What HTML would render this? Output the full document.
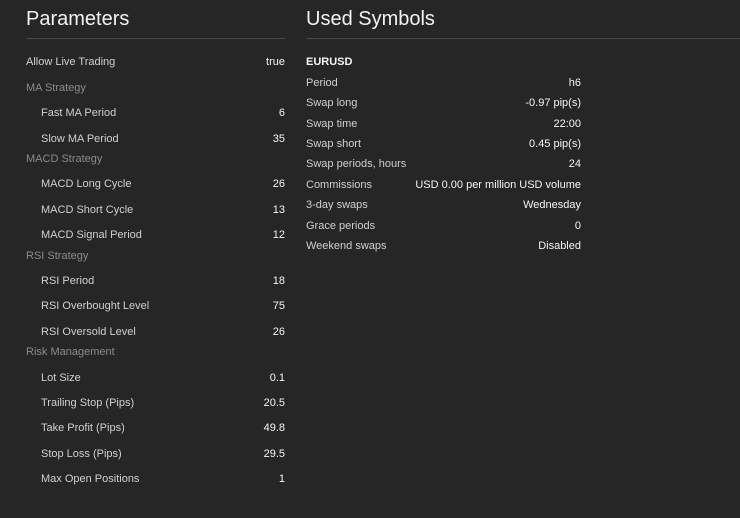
<!DOCTYPE html>
<html><head><style>
body{margin:0;width:740px;height:518px;background:#262626;font-family:"Liberation Sans",sans-serif;font-size:11px;overflow:hidden;position:relative}
div{position:absolute;line-height:16px;white-space:nowrap}
.h{font-size:20px;color:#f2f2f2;line-height:24px}
.l{color:#d0d0d0}
.s{color:#8a8a8a}
.v{color:#f5f5f5;text-align:right}
.hr{height:1px;background:#4a4a4a}
</style></head><body>
<div class="h" style="left:26px;top:7px">Parameters</div>
<div class="hr" style="left:26px;top:38px;width:259px"></div>
<div class="h" style="left:306px;top:7px">Used Symbols</div>
<div class="hr" style="left:306px;top:38px;width:434px"></div>

<div class="l" style="left:26px;top:54px">Allow Live Trading</div><div class="v" style="right:455px;top:54px">true</div>
<div class="s" style="left:26px;top:80px">MA Strategy</div>
<div class="l" style="left:41px;top:105px">Fast MA Period</div><div class="v" style="right:455px;top:105px">6</div>
<div class="l" style="left:41px;top:131px">Slow MA Period</div><div class="v" style="right:455px;top:131px">35</div>
<div class="s" style="left:26px;top:151px">MACD Strategy</div>
<div class="l" style="left:41px;top:176px">MACD Long Cycle</div><div class="v" style="right:455px;top:176px">26</div>
<div class="l" style="left:41px;top:202px">MACD Short Cycle</div><div class="v" style="right:455px;top:202px">13</div>
<div class="l" style="left:41px;top:227px">MACD Signal Period</div><div class="v" style="right:455px;top:227px">12</div>
<div class="s" style="left:26px;top:248px">RSI Strategy</div>
<div class="l" style="left:41px;top:273px">RSI Period</div><div class="v" style="right:455px;top:273px">18</div>
<div class="l" style="left:41px;top:298px">RSI Overbought Level</div><div class="v" style="right:455px;top:298px">75</div>
<div class="l" style="left:41px;top:324px">RSI Oversold Level</div><div class="v" style="right:455px;top:324px">26</div>
<div class="s" style="left:26px;top:344px">Risk Management</div>
<div class="l" style="left:41px;top:370px">Lot Size</div><div class="v" style="right:455px;top:370px">0.1</div>
<div class="l" style="left:41px;top:395px">Trailing Stop (Pips)</div><div class="v" style="right:455px;top:395px">20.5</div>
<div class="l" style="left:41px;top:420px">Take Profit (Pips)</div><div class="v" style="right:455px;top:420px">49.8</div>
<div class="l" style="left:41px;top:446px">Stop Loss (Pips)</div><div class="v" style="right:455px;top:446px">29.5</div>
<div class="l" style="left:41px;top:471px">Max Open Positions</div><div class="v" style="right:455px;top:471px">1</div>

<div class="v" style="left:306px;top:54px;font-weight:bold;text-align:left">EURUSD</div>
<div class="l" style="left:306px;top:75px">Period</div><div class="v" style="right:159px;top:75px">h6</div>
<div class="l" style="left:306px;top:95px">Swap long</div><div class="v" style="right:159px;top:95px">-0.97 pip(s)</div>
<div class="l" style="left:306px;top:116px">Swap time</div><div class="v" style="right:159px;top:116px">22:00</div>
<div class="l" style="left:306px;top:136px">Swap short</div><div class="v" style="right:159px;top:136px">0.45 pip(s)</div>
<div class="l" style="left:306px;top:156px">Swap periods, hours</div><div class="v" style="right:159px;top:156px">24</div>
<div class="l" style="left:306px;top:177px">Commissions</div><div class="v" style="right:159px;top:177px">USD 0.00 per million USD volume</div>
<div class="l" style="left:306px;top:197px">3-day swaps</div><div class="v" style="right:159px;top:197px">Wednesday</div>
<div class="l" style="left:306px;top:218px">Grace periods</div><div class="v" style="right:159px;top:218px">0</div>
<div class="l" style="left:306px;top:238px">Weekend swaps</div><div class="v" style="right:159px;top:238px">Disabled</div>
</body></html>
